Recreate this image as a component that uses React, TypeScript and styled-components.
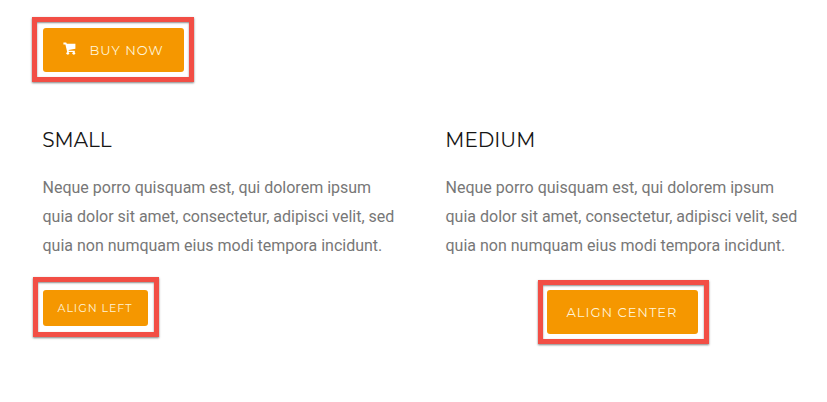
import React from "react";
import styled, { createGlobalStyle } from "styled-components";

const GlobalStyle = createGlobalStyle`
  * { box-sizing: border-box; }
  body { margin: 0; background: #fff; }
`;

const Page = styled.main`
  width: 827px;
  height: 402px;
  padding: 28px 0 0 43px;
  overflow: hidden;
  background: #fff;
  font-family: Roboto, sans-serif;
`;

const Columns = styled.div`
  display: grid;
  grid-template-columns: 353px 353px;
  column-gap: 50px;
  margin-top: 53px;
`;

const Column = styled.section`
  display: flex;
  flex-direction: column;
`;

const Title = styled.h2`
  margin: 0 0 0 -0.7px;
  font: 400 20px/30px Montserrat, Inter, sans-serif;
  color: #161616;
`;

const Copy = styled.p`
  margin: 18px 0 0 -0.5px;
  font-size: 16px;
  line-height: 29px;
  color: #777;
  white-space: nowrap;
`;

const Highlight = styled.div<{ $inset: string; $align?: string; $top?: number }>`
  position: relative;
  width: fit-content;
  align-self: ${(p) => p.$align ?? "flex-start"};
  margin-top: ${(p) => p.$top ?? 0}px;

  &::after {
    content: "";
    position: absolute;
    inset: ${(p) => p.$inset};
    border: 5px solid #f24e45;
    box-shadow: 0 1px 2px rgba(0, 0, 0, 0.5), inset 0 1px 2px rgba(0, 0, 0, 0.45);
    pointer-events: none;
  }
`;

const Button = styled.button<{ $width: number; $small?: boolean }>`
  display: flex;
  align-items: center;
  justify-content: flex-start;
  width: ${(p) => p.$width}px;
  height: ${(p) => (p.$small ? 36 : 44)}px;
  padding: 0 0 1px ${(p) => (p.$small ? 14.5 : 19.5)}px;
  border: 0;
  border-radius: 3px;
  background: #f59700;
  color: #fff3d6;
  font: 400 ${(p) => (p.$small ? 11 : 13)}px/20px Montserrat, Inter, sans-serif;
  letter-spacing: 1px;
  white-space: nowrap;
`;

const CartIcon = styled.svg`
  width: 13px;
  height: 13px;
  margin: -2px 14px 0 0;
  fill: #fff;
`;

const text = [
  "Neque porro quisquam est, qui dolorem ipsum",
  "quia dolor sit amet, consectetur, adipisci velit, sed",
  "quia non numquam eius modi tempora incidunt.",
];

const Paragraph = () => (
  <Copy>
    {text.map((line) => (
      <React.Fragment key={line}>
        {line}
        <br />
      </React.Fragment>
    ))}
  </Copy>
);

export default function App() {
  return (
    <>
      <GlobalStyle />
      <Page>
        <Highlight $inset="-11px -10px -10px -11px">
          <Button $width={141}>
            <CartIcon viewBox="0 0 13 13" aria-hidden="true">
              <path d="M0.4 0.5h2.8l.6 1.2h8.6v5L5.6 8l.2.8h6v1.2H4.2L2.4 2.4H.4z" />
              <circle cx="4.8" cy="11.3" r="1.4" />
              <circle cx="10.8" cy="11.3" r="1.4" />
            </CartIcon>
            BUY NOW
          </Button>
        </Highlight>
        <Columns>
          <Column>
            <Title>SMALL</Title>
            <Paragraph />
            <Highlight $inset="-13px -11px -11px -10px" $top={30}>
              <Button $small $width={105}>ALIGN LEFT</Button>
            </Highlight>
          </Column>
          <Column>
            <Title>MEDIUM</Title>
            <Paragraph />
            <Highlight $inset="-10px -11px -10px -9px" $align="center" $top={30}>
              <Button $width={151}>ALIGN CENTER</Button>
            </Highlight>
          </Column>
        </Columns>
      </Page>
    </>
  );
}
